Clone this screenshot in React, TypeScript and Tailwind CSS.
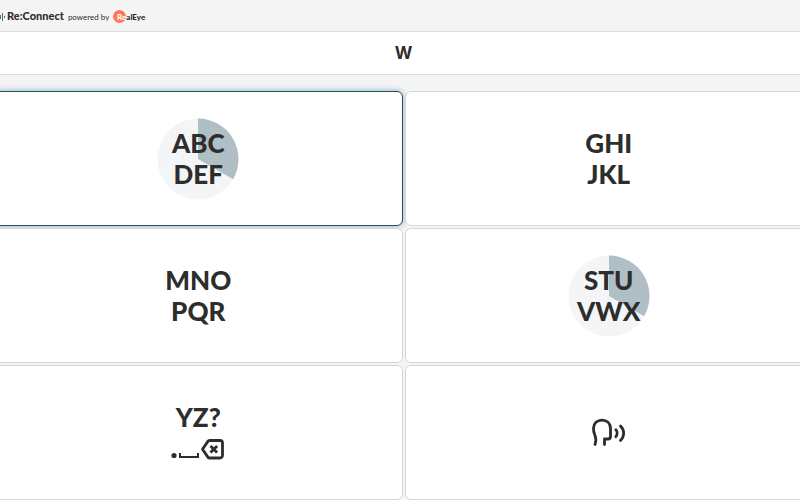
import type { ReactNode } from 'react'

type Key = {
  label: string
  rows?: string[]
  icon?: ReactNode
  progress?: boolean
  active?: boolean
}

// Dwell progress, one third of the circle filled
function Progress() {
  return (
    <svg viewBox="0 0 82 82" className="col-start-1 row-start-1 size-[82px]" aria-hidden="true">
      <circle cx="41" cy="41" r="40.5" fill="#f3f5f7" />
      <path d="M41 41V.5A40.5 40.5 0 0 1 76.1 61.2Z" fill="#b0bec5" />
    </svg>
  )
}

function PunctuationIcon() {
  return (
    <svg viewBox="0 0 54 24" className="mt-1 mb-[3px] h-6 w-[54px]" fill="none" stroke="#2d2d2d" aria-hidden="true">
      <circle cx="3" cy="18.5" r="2.6" fill="#2d2d2d" stroke="none" />
      <path d="M9 16v4h18v-4" strokeWidth="2" />
      <path d="M38.5 3.500H49A2.500 2.500 0 0 1 51.500 6v12.500A2.500 2.500 0 0 1 49 21H38.500q-1 0-1.600-.9L31.500 12.300l5.400-7.900q.6-.9 1.600-.9Z" strokeWidth="2.800" strokeLinejoin="round" />
      <path d="m39.500 9 6.600 6.600m0-6.600-6.600 6.600" strokeWidth="2.800" />
    </svg>
  )
}

function SpeakIcon() {
  return (
    <svg viewBox="0 0 36 32" className="h-8 w-9" fill="none" stroke="#2d2d2d" strokeWidth="2.8" strokeLinecap="round" strokeLinejoin="round" aria-hidden="true">
      <path d="M4 27.500c1-3 1.300-6 0-9C2.700 15.500 2.300 13.500 2.500 11 2.800 6.300 6 3.100 11 3.100c5.200 0 8.500 3.500 8.500 8.400v8c0 1.800-.8 2.500-2.500 2.500h-3.500v5.500" />
      <path d="M24.800 12.700c1.700 2 1.700 5 0 7M29.500 9c4.200 4.200 4.200 10.200 0 14.400" />
    </svg>
  )
}

const keys: Key[] = [
  { label: 'A to F', rows: ['ABC', 'DEF'], progress: true, active: true },
  { label: 'G to L', rows: ['GHI', 'JKL'] },
  { label: 'M to R', rows: ['MNO', 'PQR'] },
  { label: 'S to X', rows: ['STU', 'VWX'], progress: true },
  { label: 'Y, Z and punctuation', rows: ['YZ?'], icon: <PunctuationIcon /> },
  { label: 'Speak', icon: <SpeakIcon /> },
]

export default function App() {
  return (
    <div className="min-h-screen overflow-hidden bg-[#f4f4f4] font-['Lato',sans-serif] text-[#2d2d2d]">
      <header className="flex h-8 items-center border-b border-[#dadcdd] pt-[2px]">
        <svg viewBox="0 0 5 10" className="mr-[2px] h-[10px] w-[5px]" stroke="#427181" strokeWidth="1" aria-hidden="true">
          <path d="M.5 3v4M2.500 1v8M4.500 4v2" />
        </svg>
        <h1 className="text-[11px] font-black">Re:Connect</h1>
        <span className="ml-1 text-[8px]">powered by</span>
        <a href="#realeye" className="ml-1 flex items-center text-[8px] font-black">
          <span className="flex size-[13px] items-center justify-end rounded-full bg-[#ff7654] text-white">Re</span>
          alEye
        </a>
      </header>

      {/* The keyboard runs past both window edges */}
      <main className="-mr-[13px] -ml-[6px]">
        <output className="flex h-[43px] items-center justify-center border-b border-[#d9dddf] bg-white pt-[2px] font-['Inter',sans-serif] text-[17px] font-bold">
          W
        </output>

        <div className="mt-4 grid grid-cols-2 gap-x-[2px] gap-y-[2px]">
          {keys.map((key) => (
            <button
              key={key.label}
              type="button"
              aria-label={key.label}
              className={
                key.active
                  ? 'grid h-[135px] place-content-center place-items-center rounded-md border border-[#244f5f] bg-white shadow-[0_0_6px_#8caebb]'
                  : 'grid h-[135px] place-content-center place-items-center rounded-md border border-[#d3d7d9] bg-white'
              }
            >
              {key.progress && <Progress />}
              <span className="col-start-1 row-start-1 flex flex-col items-center pt-px text-[26px] leading-[31px] font-black">
                {key.rows?.map((row) => <span key={row}>{row}</span>)}
                {key.icon}
              </span>
            </button>
          ))}
        </div>
      </main>
    </div>
  )
}
